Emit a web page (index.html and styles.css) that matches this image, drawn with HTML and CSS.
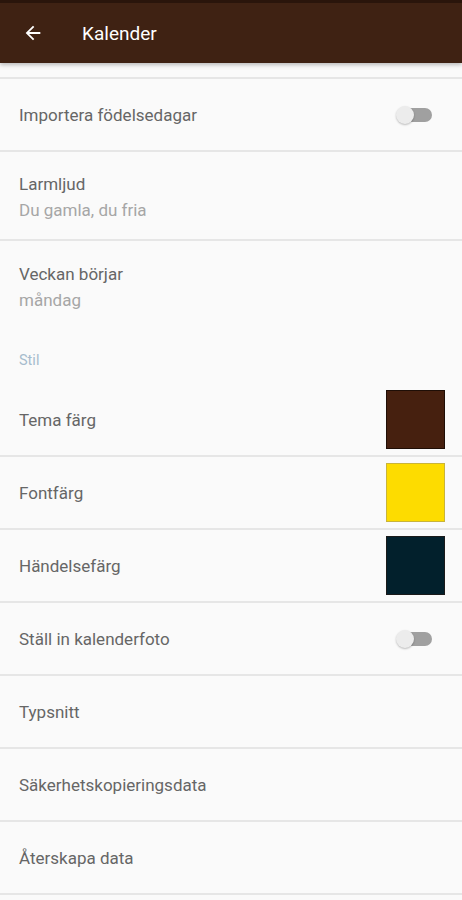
FILE: index.html
```html
<!DOCTYPE html>
<html lang="sv">
<head>
<meta charset="utf-8">
<link rel="stylesheet" href="styles.css">
</head>
<body>
<header class="appbar">
  <svg class="back" width="22" height="22" viewBox="0 0 24 24"><path d="M20 11H7.83l5.59-5.59L12 4l-8 8 8 8 1.41-1.41L7.83 13H20v-2z" fill="#fff"/></svg>
  <span class="title">Kalender</span>
</header>
<main class="list">
  <div class="row switch-row"><span class="label">Importera födelsedagar</span><span class="toggle"><span class="thumb"></span></span></div>
  <div class="row two"><span class="label">Larmljud</span><span class="sub">Du gamla, du fria</span></div>
  <div class="row two nodiv"><span class="label">Veckan börjar</span><span class="sub">måndag</span></div>
  <div class="category">Stil</div>
  <div class="row swatch-row"><span class="label">Tema färg</span><span class="swatch brown"></span></div>
  <div class="row swatch-row"><span class="label">Fontfärg</span><span class="swatch yellow"></span></div>
  <div class="row swatch-row"><span class="label">Händelsefärg</span><span class="swatch navy"></span></div>
  <div class="row switch-row"><span class="label">Ställ in kalenderfoto</span><span class="toggle"><span class="thumb"></span></span></div>
  <div class="row"><span class="label">Typsnitt</span></div>
  <div class="row"><span class="label">Säkerhetskopieringsdata</span></div>
  <div class="row"><span class="label">Återskapa data</span></div>
</main>
</body>
</html>
```
FILE: styles.css
```css
* { box-sizing: border-box; }
html, body { margin: 0; padding: 0; }
body {
  background: #fafafa;
  font-family: Roboto, "Noto Sans", sans-serif;
  width: 462px;
  height: 900px;
  overflow: hidden;
}
.appbar {
  height: 63px;
  background: #3f2213;
  border-top: 3px solid #2a150b;
  display: flex;
  align-items: center;
  padding-left: 22px;
  box-shadow: 0 2px 4px rgba(0,0,0,0.25);
  position: relative;
  z-index: 1;
}
.back { display: block; }
.title {
  color: #fff;
  font-size: 19px;
  margin-left: 38px;
  margin-top: 1px;
}
.list {
  margin-top: 14px;
  border-top: 2px solid #e6e6e6;
}
.row {
  display: flex;
  align-items: center;
  justify-content: space-between;
  height: 73px;
  padding: 0 17px 0 19px;
  border-bottom: 2px solid #e6e6e6;
}
.label {
  color: #666666;
  font-size: 17px;
}
.row.two {
  height: 89px;
  flex-direction: column;
  align-items: flex-start;
  justify-content: center;
  gap: 6px;
  padding-top: 2px;
}
.row.nodiv { border-bottom: none; height: 89px; }
.sub {
  color: #a6a6a6;
  font-size: 17px;
}
.category {
  color: #a6bccd;
  font-size: 14.5px;
  padding: 24px 19px 0;
  height: 54px;
  line-height: 14px;
}
.swatch-row { height: 73px; }
.swatch {
  width: 59px;
  height: 59px;
  border: 1.5px solid #2a2a2a;
  display: block;
}
.brown { background: #46200f; border-color: #1f0e06; }
.yellow { background: #fddc00; border-color: #c9b43a; }
.navy { background: #02202c; border-color: #1a1a1a; }
.toggle {
  position: relative;
  width: 33px;
  height: 14px;
  border-radius: 7px;
  background: #a0a0a0;
  margin-right: 13px;
}
.thumb {
  position: absolute;
  left: -3px;
  top: -2px;
  width: 18px;
  height: 18px;
  border-radius: 50%;
  background: #ececec;
  box-shadow: 0 1px 2px rgba(0,0,0,0.25);
}
```
